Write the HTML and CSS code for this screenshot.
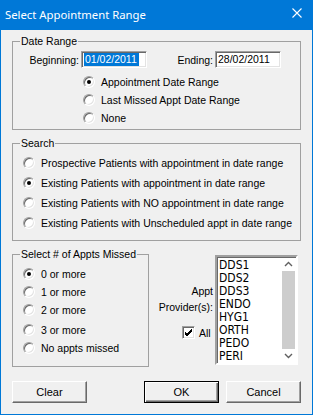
FILE: index.html
```html
<!DOCTYPE html>
<html lang="en">

<head>
    <meta charset="UTF-8">
    <title>Select Appointment Range</title>
    <link rel="stylesheet" href="styles.css">
</head>

<body>
    <div class="window">
        <div class="titlebar">
            <span class="title">Select Appointment Range</span>
            <svg class="close" width="10" height="10" viewBox="0 0 10 10">
                <path d="M0.5 0.5 L9.5 9.5 M9.5 0.5 L0.5 9.5" stroke="#fff" stroke-width="1.1" fill="none"/>
            </svg>
        </div>

        <div class="content">
            <fieldset class="group group-date">
                <legend>Date Range</legend>
                <div class="date-row">
                    <span class="date-label">Beginning:</span>
                    <span class="field"><span class="selected">01/02/2011</span></span>
                    <span class="date-label">Ending:</span>
                    <span class="field">28/02/2011</span>
                </div>
                <div class="options date-options">
                    <div class="option"><span class="radio checked"></span>Appointment Date Range</div>
                    <div class="option"><span class="radio"></span>Last Missed Appt Date Range</div>
                    <div class="option"><span class="radio"></span>None</div>
                </div>
            </fieldset>

            <fieldset class="group group-search">
                <legend>Search</legend>
                <div class="options search-options">
                    <div class="option"><span class="radio"></span>Prospective Patients with appointment in date range</div>
                    <div class="option"><span class="radio checked"></span>Existing Patients with appointment in date range</div>
                    <div class="option"><span class="radio"></span>Existing Patients with NO appointment in date range</div>
                    <div class="option"><span class="radio"></span>Existing Patients with Unscheduled appt in date range</div>
                </div>
            </fieldset>

            <div class="lower">
                <fieldset class="group group-missed">
                    <legend>Select # of Appts Missed</legend>
                    <div class="options missed-options">
                        <div class="option"><span class="radio checked"></span>0 or more</div>
                        <div class="option"><span class="radio"></span>1 or more</div>
                        <div class="option"><span class="radio"></span>2 or more</div>
                        <div class="option option-gap"><span class="radio"></span>3 or more</div>
                        <div class="option"><span class="radio"></span>No appts missed</div>
                    </div>
                </fieldset>

                <div class="provider-col">
                    <div class="provider-label">Appt</div>
                    <div class="provider-label">Provider(s):</div>
                    <div class="all-row">
                        <span class="checkbox">
                            <svg width="9" height="9" viewBox="0 0 9 9">
                                <path d="M1 4 L3 6 L8 1 M1 5 L3 7 L8 2 M1 6 L3 8 L8 3" stroke="#000" stroke-width="1" fill="none"/>
                            </svg>
                        </span>
                        All
                    </div>
                </div>

                <div class="listbox">
                    <div class="items">
                        <div class="item">DDS1</div>
                        <div class="item">DDS2</div>
                        <div class="item">DDS3</div>
                        <div class="item">ENDO</div>
                        <div class="item">HYG1</div>
                        <div class="item">ORTH</div>
                        <div class="item">PEDO</div>
                        <div class="item">PERI</div>
                    </div>
                    <div class="scrollbar">
                        <svg class="arrow" width="9" height="6" viewBox="0 0 9 6">
                            <path d="M1 5 L4.5 1.5 L8 5" stroke="#606060" stroke-width="1.4" fill="none"/>
                        </svg>
                        <div class="thumb"></div>
                        <svg class="arrow" width="9" height="6" viewBox="0 0 9 6">
                            <path d="M1 1 L4.5 4.5 L8 1" stroke="#606060" stroke-width="1.4" fill="none"/>
                        </svg>
                    </div>
                </div>
            </div>

            <div class="buttons">
                <button class="button btn-clear">Clear</button>
                <button class="button btn-default">OK</button>
                <button class="button">Cancel</button>
            </div>
        </div>
    </div>
</body>

</html>
```

FILE: styles.css
```css
body {
    margin: 0;
    background-color: #ffffff;
}

.window {
    width: 311px;
    height: 414px;
    border: 1px solid #0078d7;
    border-top: none;
    background-color: #f0f0f0;
    font-family: "Liberation Sans", Arial, sans-serif;
    font-size: 10.5px;
    color: #000000;
    white-space: nowrap;
}

.titlebar {
    height: 30px;
    background-color: #0078d7;
    display: flex;
    align-items: center;
    justify-content: space-between;
    padding: 0 10px 0 4px;
}

.title {
    font-family: "Noto Sans", sans-serif;
    font-size: 11.3px;
    color: #ffffff;
    margin-top: -2px;
}

.close {
    display: block;
    margin-top: -4px;
}

.content {
    padding-top: 5px;
}

.group {
    margin: 0 0 0 11px;
    padding: 0;
    border: 1px solid #a0a0a0;
    min-width: 0;
}

.group legend {
    margin-left: 7px;
    padding: 0 1px;
    line-height: 13px;
}

.group-date {
    width: 287px;
    padding-bottom: 2px;
}

.group-search {
    width: 287px;
    margin-top: 7px;
    padding-bottom: 7px;
}

.date-row {
    display: flex;
    align-items: center;
    margin-top: 3px;
    height: 17px;
}

.date-label {
    width: 66px;
    padding-right: 2px;
    text-align: right;
}

.field {
    width: 62px;
    height: 15px;
    line-height: 15px;
    padding-left: 2px;
    background-color: #ffffff;
    border: 1px solid;
    border-color: #a0a0a0 #ffffff #ffffff #a0a0a0;
    box-shadow: inset 1px 1px 0 #696969, inset -1px -1px 0 #e3e3e3;
}

.selected {
    display: inline-block;
    background-color: #0078d7;
    color: #ffffff;
    line-height: 13px;
    padding: 0 2px 0 1px;
}

.options {
    display: flex;
    flex-direction: column;
}

.option {
    display: flex;
    align-items: center;
    height: 18px;
}

.date-options {
    margin: 5px 0 0 70px;
}

.search-options {
    margin: 3px 0 0 10px;
}

.search-options .option {
    height: 20px;
}

.radio {
    width: 10px;
    height: 10px;
    border-radius: 50%;
    border: 1px solid;
    border-color: #a0a0a0 #ffffff #ffffff #a0a0a0;
    box-shadow: inset 1px 1px 0 #696969, inset -1px -1px 0 #e3e3e3;
    background-color: #ffffff;
    margin-right: 6px;
    display: flex;
    align-items: center;
    justify-content: center;
    flex-shrink: 0;
}

.radio.checked::after {
    content: "";
    width: 4px;
    height: 4px;
    border-radius: 50%;
    background-color: #000000;
}

.lower {
    display: flex;
    margin-top: 7px;
}

.group-missed {
    width: 135px;
    padding-bottom: 9px;
}

.missed-options {
    margin: 4px 0 0 10px;
}

.option-gap {
    margin-top: 2px;
}

.provider-col {
    width: 64px;
    padding: 35px 2px 0 0;
    display: flex;
    flex-direction: column;
}

.provider-label {
    text-align: right;
    line-height: 16px;
}

.all-row {
    display: flex;
    align-items: center;
    margin: 11px 0 0 33px;
    height: 13px;
}

.checkbox {
    width: 11px;
    height: 11px;
    border: 1px solid;
    border-color: #a0a0a0 #ffffff #ffffff #a0a0a0;
    box-shadow: inset 1px 1px 0 #696969, inset -1px -1px 0 #e3e3e3;
    background-color: #ffffff;
    display: flex;
    align-items: center;
    justify-content: center;
    margin-right: 4px;
}

.listbox {
    width: 79px;
    height: 106px;
    margin-top: 7px;
    border: 2px solid;
    border-color: #a0a0a0 #ffffff #ffffff #a0a0a0;
    box-shadow: inset 1px 1px 0 #696969;
    background-color: #ffffff;
    display: flex;
}

.items {
    flex: 1;
    padding: 2px 0 0 2px;
    font-family: "Liberation Sans Narrow", "DejaVu Sans Condensed", "Liberation Sans", sans-serif;
    font-stretch: condensed;
    font-size: 12px;
}

.item {
    line-height: 13px;
}

.scrollbar {
    width: 15px;
    display: flex;
    flex-direction: column;
    align-items: center;
    justify-content: space-between;
    padding: 4px 0;
}

.arrow {
    display: block;
}

.thumb {
    width: 13px;
    flex: 1;
    margin: 4px 0;
    background-color: #cdcdcd;
}

.buttons {
    display: flex;
    margin: 14px 0 0 11px;
}

.button {
    width: 75px;
    height: 22px;
    padding: 0;
    font-family: "Liberation Sans", Arial, sans-serif;
    font-size: 11px;
    color: #000000;
    background-color: #f0f0f0;
    border: 1px solid;
    border-color: #ffffff #696969 #696969 #ffffff;
    box-shadow: inset -1px -1px 0 #a0a0a0;
    margin-right: 7px;
}

.btn-clear {
    margin-right: 57px;
}

.btn-default {
    border: 1px solid #000000;
    box-shadow: inset 1px 1px 0 #ffffff, inset -1px -1px 0 #696969, inset -2px -2px 0 #a0a0a0;
}
```
